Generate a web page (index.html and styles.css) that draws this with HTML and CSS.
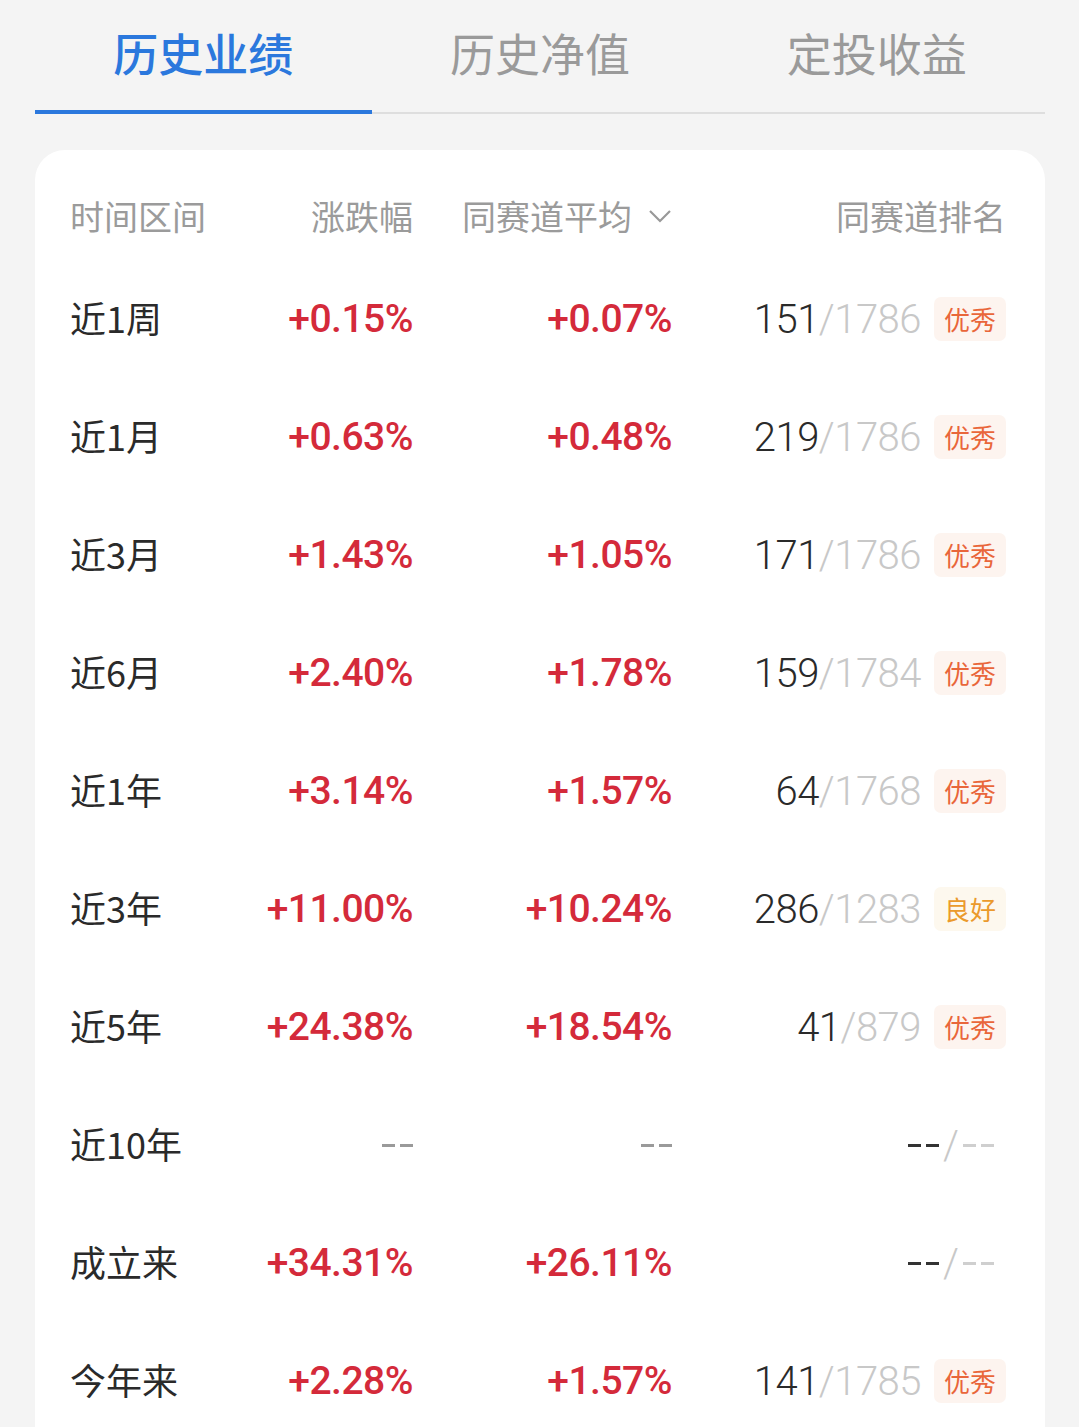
FILE: index.html
```html
<!DOCTYPE html>
<html lang="zh-CN">
<head>
<meta charset="utf-8">
<link rel="stylesheet" href="styles.css">
</head>
<body>
<div class="tabs">
  <div class="tab active">历史业绩</div>
  <div class="tab">历史净值</div>
  <div class="tab">定投收益</div>
</div>
<div class="card">
  <div class="row head">
    <div class="c1">时间区间</div>
    <div class="c2">涨跌幅</div>
    <div class="c3">同赛道平均<svg class="chev" width="24" height="14" viewBox="0 0 24 14"><path d="M2 2 L12 12 L22 2" fill="none" stroke="#999" stroke-width="2.2"/></svg></div>
    <div class="c4">同赛道排名</div>
  </div>
  <div class="row"><div class="c1">近1周</div><div class="c2 num red">+0.15%</div><div class="c3 num red">+0.07%</div><div class="c4"><span class="rk">151</span><span class="tot">/1786</span><span class="badge ex">优秀</span></div></div>
  <div class="row"><div class="c1">近1月</div><div class="c2 num red">+0.63%</div><div class="c3 num red">+0.48%</div><div class="c4"><span class="rk">219</span><span class="tot">/1786</span><span class="badge ex">优秀</span></div></div>
  <div class="row"><div class="c1">近3月</div><div class="c2 num red">+1.43%</div><div class="c3 num red">+1.05%</div><div class="c4"><span class="rk">171</span><span class="tot">/1786</span><span class="badge ex">优秀</span></div></div>
  <div class="row"><div class="c1">近6月</div><div class="c2 num red">+2.40%</div><div class="c3 num red">+1.78%</div><div class="c4"><span class="rk">159</span><span class="tot">/1784</span><span class="badge ex">优秀</span></div></div>
  <div class="row"><div class="c1">近1年</div><div class="c2 num red">+3.14%</div><div class="c3 num red">+1.57%</div><div class="c4"><span class="rk">64</span><span class="tot">/1768</span><span class="badge ex">优秀</span></div></div>
  <div class="row"><div class="c1">近3年</div><div class="c2 num red">+11.00%</div><div class="c3 num red">+10.24%</div><div class="c4"><span class="rk">286</span><span class="tot">/1283</span><span class="badge good">良好</span></div></div>
  <div class="row"><div class="c1">近5年</div><div class="c2 num red">+24.38%</div><div class="c3 num red">+18.54%</div><div class="c4"><span class="rk">41</span><span class="tot">/879</span><span class="badge ex">优秀</span></div></div>
  <div class="row"><div class="c1">近10年</div><div class="c2 dashcell"><span class="dd gray"></span></div><div class="c3 dashcell"><span class="dd gray"></span></div><div class="c4 nob"><span class="dd dark"></span><span class="slash">/</span><span class="dd light"></span></div></div>
  <div class="row"><div class="c1">成立来</div><div class="c2 num red">+34.31%</div><div class="c3 num red">+26.11%</div><div class="c4 nob"><span class="dd dark"></span><span class="slash">/</span><span class="dd light"></span></div></div>
  <div class="row"><div class="c1">今年来</div><div class="c2 num red">+2.28%</div><div class="c3 num red">+1.57%</div><div class="c4"><span class="rk">141</span><span class="tot">/1785</span><span class="badge ex">优秀</span></div></div>
</div>
</body>
</html>
```

FILE: styles.css
```css
html, body {
  margin: 0;
  padding: 0;
  background: #f4f4f4;
  font-family: Roboto, "Noto Sans CJK SC", sans-serif;
}
.tabs {
  display: flex;
  margin: 0 34px 0 35px;
  border-bottom: 2px solid #dedede;
}
.tab {
  flex: 1;
  height: 112px;
  display: flex;
  align-items: center;
  justify-content: center;
  padding-bottom: 8px;
  box-sizing: border-box;
  font-family: "Noto Sans CJK SC", sans-serif;
  font-size: 45px;
  color: #9a9a9a;
  position: relative;
}
.tab.active {
  color: #2b78dd;
  font-weight: 500;
}
.tab.active::after {
  content: "";
  position: absolute;
  left: 0;
  right: 0;
  bottom: -2px;
  height: 4px;
  background: #2b78dd;
}
.card {
  margin: 36px 34px 0 35px;
  background: #fff;
  border-radius: 30px 30px 0 0;
  padding: 0 39px 0 35px;
  height: 1300px;
}
.row {
  display: grid;
  grid-template-columns: 180px 163px 259px 334px;
  align-items: center;
  height: 118px;
}
.row.head {
  height: 110px;
  padding-top: 20px;
  box-sizing: border-box;
  font-family: "Noto Sans CJK SC", sans-serif;
  font-size: 34px;
  color: #9b9b9b;
}
.row.head .c3 {
  display: flex;
  align-items: center;
  justify-content: flex-end;
}
.chev {
  margin-left: 16px;
  margin-top: 2px;
}
.c1 {
  font-family: "Noto Sans CJK SC", sans-serif;
  font-size: 36px;
  color: #2a2a2a;
  text-align: left;
  padding-bottom: 5px;
}
.head .c1 { color: #9b9b9b; font-size: 34px; padding-bottom: 0; }
.c2, .c3, .c4 { text-align: right; }
.num {
  font-size: 39px;
  font-weight: 500;
  letter-spacing: -0.5px;
}
.red { color: #d42a3a; }
.c4 {
  display: flex;
  align-items: center;
  justify-content: flex-end;
}
.dashcell {
  display: flex;
  align-items: center;
  justify-content: flex-end;
}
.dd {
  display: inline-block;
  width: 31px;
  height: 3px;
  background: linear-gradient(to right, currentColor 0 13px, transparent 13px 18px, currentColor 18px 31px);
}
.dd.gray { color: #9a9a9a; }
.dd.dark { color: #333; }
.dd.light { color: #cfcfcf; }
.slash {
  font-size: 40px;
  font-weight: 300;
  color: #c8c8c8;
  margin: 0 4px;
}
.rk {
  font-size: 40px;
  font-weight: 300;
  color: #2a2a2a;
  letter-spacing: -0.5px;
}
.tot {
  font-size: 40px;
  font-weight: 300;
  color: #c8c8c8;
  letter-spacing: -0.5px;
}
.nob { padding-right: 12px; }
.badge {
  margin-left: 13px;
  font-family: "Noto Sans CJK SC", sans-serif;
  font-size: 26px;
  height: 44px;
  line-height: 44px;
  padding: 0 10px;
  border-radius: 7px;
}
.badge.ex { color: #e9663a; background: #fdf4ef; }
.badge.good { color: #eb9a2c; background: #fdf8ee; }
```
